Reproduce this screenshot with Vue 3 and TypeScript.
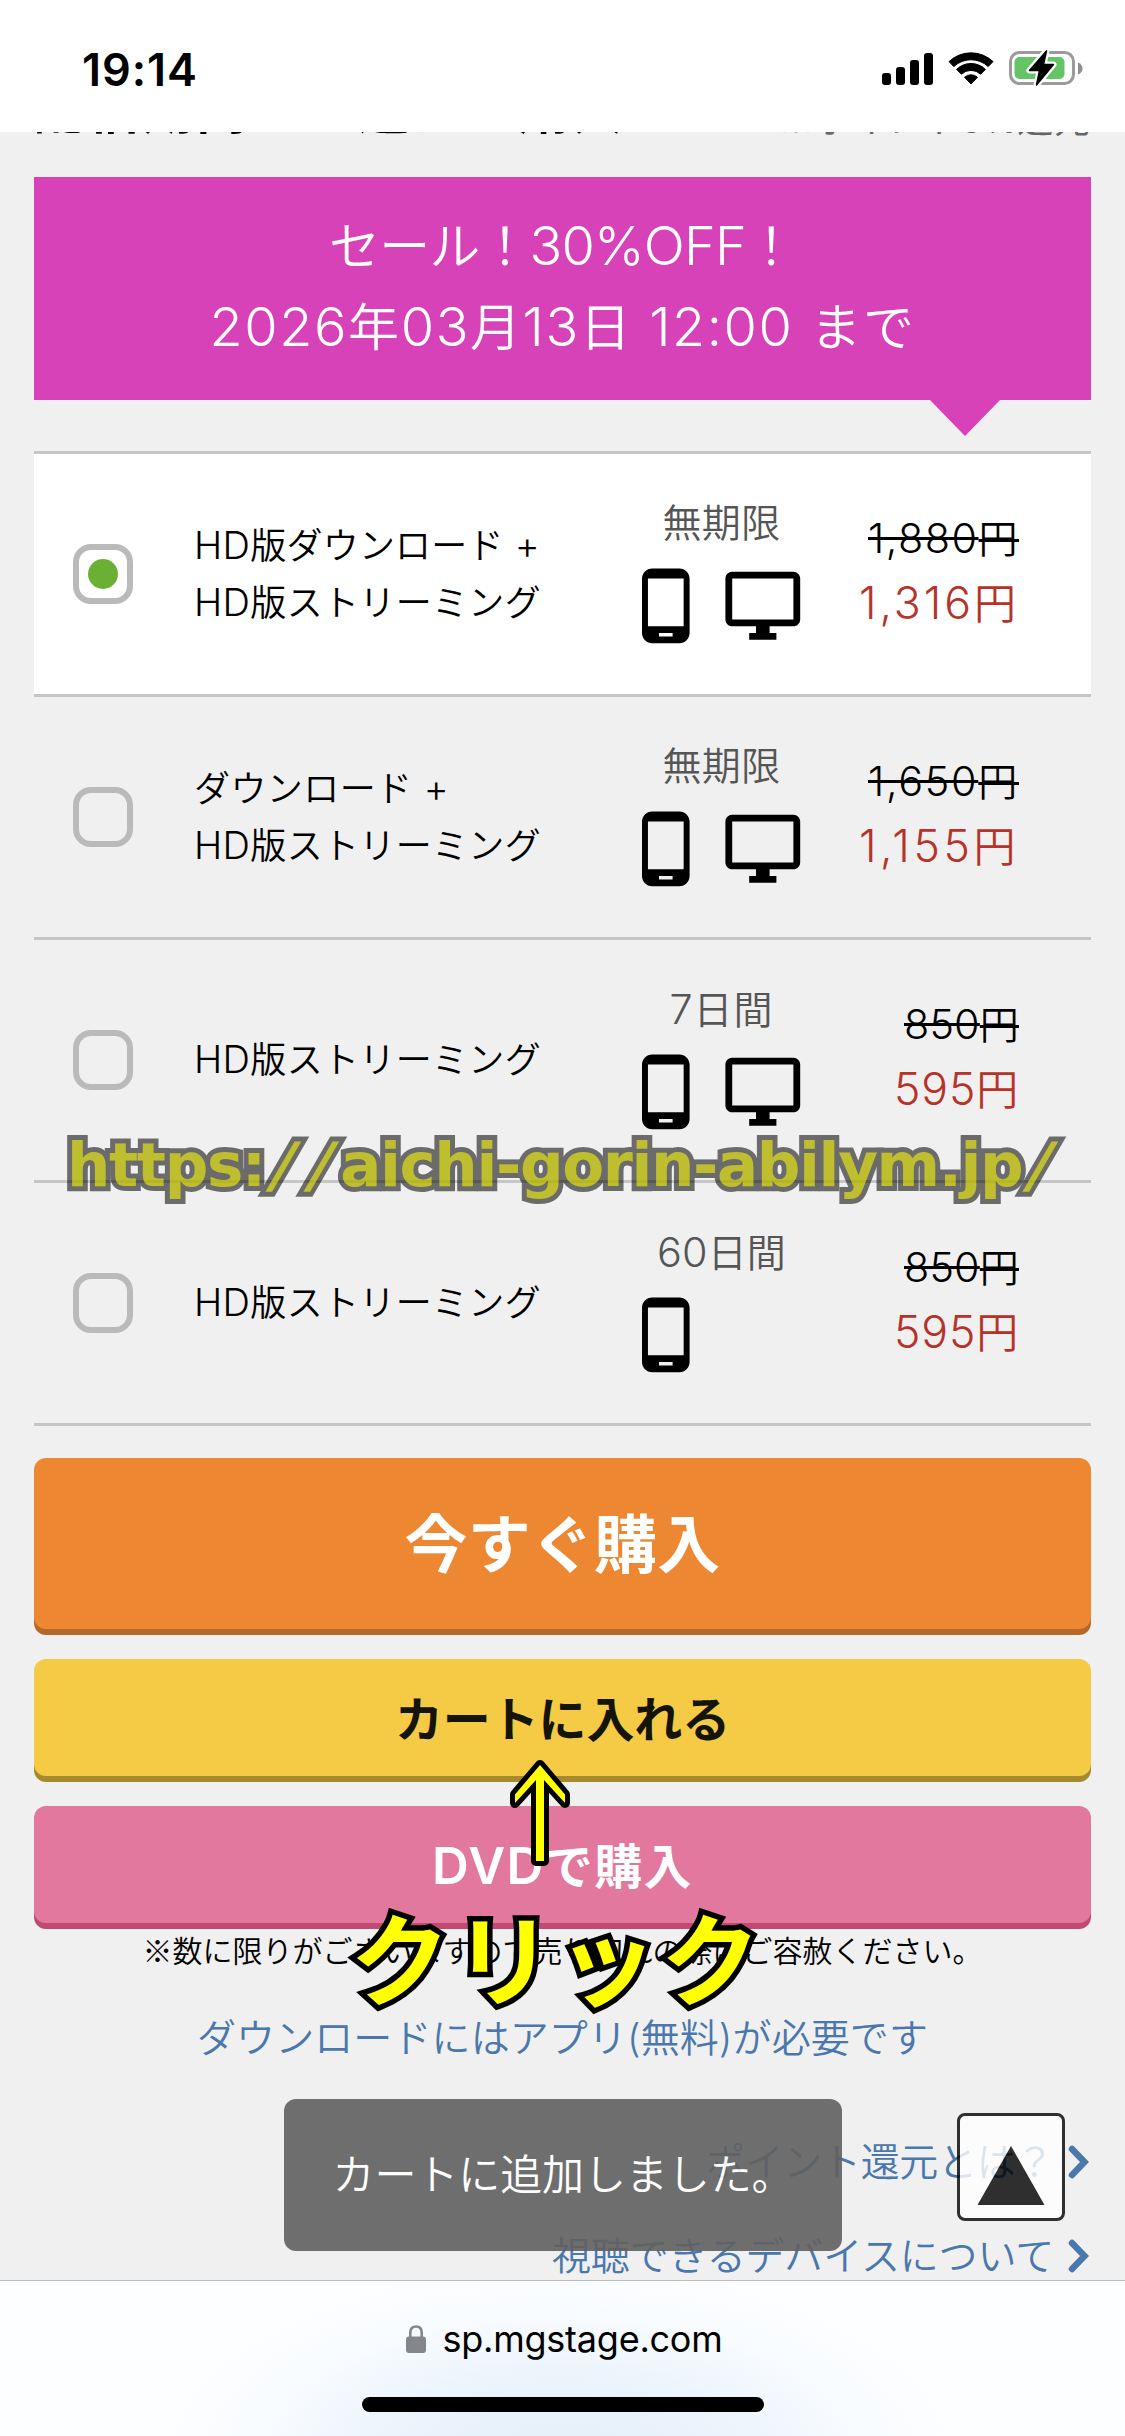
<script setup lang="ts">
import type { Directive } from 'vue'

interface Plan {
  label: { text: string; width: number }[]
  period: string
  periodWidth: number
  desktop: boolean
  before: string
  beforeWidth: number
  price: string
  priceWidth: number
  selected: boolean
}

const streaming = { text: 'HD版ストリーミング', width: 347 }

const plans: Plan[] = [
  {
    label: [{ text: 'HD版ダウンロード +', width: 346 }, streaming],
    period: '無期限', periodWidth: 118, desktop: true,
    before: '1,880', beforeWidth: 151, price: '1,316', priceWidth: 160, selected: true,
  },
  {
    label: [{ text: 'ダウンロード +', width: 255 }, streaming],
    period: '無期限', periodWidth: 118, desktop: true,
    before: '1,650', beforeWidth: 151, price: '1,155', priceWidth: 160, selected: false,
  },
  {
    label: [streaming],
    period: '7日間', periodWidth: 104, desktop: true,
    before: '850', beforeWidth: 115, price: '595', priceWidth: 125, selected: false,
  },
  {
    label: [streaming],
    period: '60日間', periodWidth: 129, desktop: false,
    before: '850', beforeWidth: 115, price: '595', priceWidth: 125, selected: false,
  },
]

/** Splits a text into runs so that Latin letters and digits can be set a little larger. */
function runs(text: string): { latin: boolean; text: string }[] {
  return (text.match(/[\x20-\x7e]+|[^\x20-\x7e]+/g) ?? []).map((part) => ({
    latin: /^[\x20-\x7e]/.test(part),
    text: part,
  }))
}

/** Tracks a line of text out (or in) to the given width. */
const vFit: Directive<HTMLElement, number> = {
  mounted(el, { value }) {
    const count = (el.textContent ?? '').length
    const natural = el.getBoundingClientRect().width
    el.style.letterSpacing = `${(value - natural) / count}px`
  },
}

const watermark = ['https:', '/', '/', 'aichi-gorin-abilym.jp', '/']
</script>

<template>
  <div class="phone">
    <header class="status">
      <span v-fit="116" class="fit clock">19:14</span>
      <div class="status-icons">
        <svg class="signal" width="51" height="32" viewBox="0 0 51 32">
          <rect x="0" y="20" width="9" height="12" rx="3" />
          <rect x="14" y="14" width="9" height="18" rx="3" />
          <rect x="28" y="7" width="9" height="25" rx="3" />
          <rect x="42" y="0" width="9" height="32" rx="3" />
        </svg>
        <svg class="wifi" width="46" height="33" viewBox="0 0 46 33">
          <path d="M1 9.600A32 32 0 0 1 45 9.600L40.200 14.600A25 25 0 0 0 5.800 14.600Z" stroke="#000" stroke-width="1" stroke-linejoin="round" />
          <path d="M8.600 17.400A20.500 20.500 0 0 1 37.400 17.400L32.600 22.200A14 14 0 0 0 13.400 22.200Z" stroke="#000" stroke-width="1" stroke-linejoin="round" />
          <path d="M16.500 25.300A9.600 9.600 0 0 1 29.500 25.300L23 32Z" stroke="#000" stroke-width="1" stroke-linejoin="round" />
        </svg>
        <svg class="battery" width="74" height="38" viewBox="0 0 74 38">
          <rect x="1.500" y="3.500" width="63" height="31" rx="9" fill="none" stroke="#9b9b9b" stroke-width="3" />
          <path d="M69 13.500V25.500C75 23.500 75 15.500 69 13.500Z" fill="#8f8f8f" />
          <rect x="5.500" y="8" width="50" height="22" rx="5" fill="#65c466" />
          <path d="M37.500 1.500L20.500 21.500H30.500L27.500 36L44.500 15.500H34.500Z" fill="#000" stroke="#fff" stroke-width="6" stroke-linejoin="round" paint-order="stroke" />
          <path d="M37.500 2L20.500 21.500H30.500L27.500 36L44.500 15.500H34.500Z" stroke="#000" stroke-width="1.500" stroke-linejoin="round" />
        </svg>
      </div>
    </header>

    <main class="page">
      <div class="heading">
        <span v-fit="592" class="fit heading-title">配信期間から選んで購入</span>
        <span v-fit="313" class="fit heading-note">※ポイント5%還元</span>
      </div>

      <section class="sale">
        <div class="sale-line">
          <span v-fit="467" class="fit"><span v-for="(r, i) in runs('セール！30%OFF！')" :key="i" :class="{ latin: r.latin }">{{ r.text }}</span></span>
        </div>
        <div class="sale-line">
          <span v-fit="706" class="fit"><span v-for="(r, i) in runs('2026年03月13日 12:00 まで')" :key="i" :class="{ latin: r.latin }">{{ r.text }}</span></span>
        </div>
        <i class="sale-tip"></i>
      </section>

      <ul class="plans">
        <li v-for="(plan, i) in plans" :key="i" class="plan" :class="{ selected: plan.selected }">
          <span class="check"><i v-if="plan.selected" class="dot"></i></span>
          <div class="label">
            <div v-for="(line, j) in plan.label" :key="j">
              <span v-fit="line.width" class="fit"><span v-for="(r, k) in runs(line.text)" :key="k" :class="{ latin: r.latin }">{{ r.text }}</span></span>
            </div>
          </div>
          <div class="term">
            <div class="period">
              <span v-fit="plan.periodWidth" class="fit"><span v-for="(r, k) in runs(plan.period)" :key="k" :class="{ latin: r.latin }">{{ r.text }}</span></span>
            </div>
            <div class="devices">
              <svg width="81.600" height="81.600" viewBox="0 0 24 24">
                <path d="M16 1H8C6.340 1 5 2.340 5 4v16c0 1.660 1.340 3 3 3h8c1.660 0 3-1.340 3-3V4c0-1.660-1.340-3-3-3zm-2 20h-4v-1h4v1zm3.250-3H6.750V4h10.500v14z" />
              </svg>
              <svg v-if="plan.desktop" width="81.600" height="81.600" viewBox="0 0 24 24">
                <path d="M21 2H3c-1.100 0-2 .9-2 2v12c0 1.100.9 2 2 2h7v2H8v2h8v-2h-2v-2h7c1.100 0 2-.9 2-2V4c0-1.100-.9-2-2-2zm0 14H3V4h18v12z" />
              </svg>
            </div>
          </div>
          <div class="prices">
            <div class="before"><span v-fit="plan.beforeWidth" class="fit struck"><span class="digits">{{ plan.before }}</span>円</span></div>
            <div class="now"><span v-fit="plan.priceWidth" class="fit"><span class="digits">{{ plan.price }}</span>円</span></div>
          </div>
        </li>
      </ul>

      <div class="actions">
        <button class="btn buy"><span v-fit="316" class="fit">今すぐ購入</span></button>
        <button class="btn cart"><span v-fit="335" class="fit">カートに入れる</span></button>
        <button class="btn dvd"><span v-fit="261" class="fit"><span class="latin">DVD</span>で購入</span></button>
      </div>

      <p class="note">※数に限りがございますので売り切れの際はご容赦ください。</p>
      <a class="app-link"><span v-fit="731" class="fit">ダウンロードにはアプリ(無料)が必要です</span></a>

      <nav class="links">
        <a>
          <span v-fit="348" class="fit">ポイント還元とは？</span>
          <svg width="21" height="34" viewBox="0 0 21 34"><path d="M4 4L16.500 17L4 30" /></svg>
        </a>
        <a>
          <span v-fit="502" class="fit">視聴できるデバイスについて</span>
          <svg width="21" height="34" viewBox="0 0 21 34"><path d="M4 4L16.500 17L4 30" /></svg>
        </a>
      </nav>
    </main>

    <footer class="browser">
      <div class="address">
        <svg width="20" height="28" viewBox="0 0 20 28">
          <path d="M4.300 13V7.500C4.300 3.500 6.500 1.500 10 1.500S15.700 3.500 15.700 7.500V13" fill="none" stroke="#85868b" stroke-width="2.600" />
          <rect x="0" y="11.500" width="20" height="16.500" rx="3" fill="#85868b" />
        </svg>
        <span v-fit="280" class="fit">sp.mgstage.com</span>
      </div>
      <i class="home"></i>
    </footer>

    <div class="toast"><span v-fit="461" class="fit">カートに追加しました。</span></div>
    <div class="to-top">
      <svg width="68" height="59" viewBox="0 0 68 59"><path d="M34 0L67.500 59H0.500Z" /></svg>
    </div>

    <div class="watermark outline"><span v-for="(part, i) in watermark" :key="i" :class="{ slash: part === '/' }" :data-text="part"></span></div>
    <div class="watermark"><span v-for="(part, i) in watermark" :key="i" :class="{ slash: part === '/' }">{{ part }}</span></div>

    <svg class="arrow" width="64" height="112" viewBox="0 0 64 112">
      <path d="M32 8L57 37.500V46L36 23V104H28V23L7 46V37.500Z" />
    </svg>
    <div class="click">クリック</div>
  </div>
</template>

<style>
body {
  background: #f0f0f0;
}
</style>

<style scoped>
.phone {
  position: relative;
  display: flex;
  flex-direction: column;
  width: 1125px;
  height: 2436px;
  overflow: hidden;
  background: #f0f0f0;
  color: #000;
  font-family: Inter, "Noto Sans CJK JP", sans-serif;
  font-weight: 350;
}

.fit {
  display: inline-block;
  white-space: pre;
}

.latin {
  font-size: 1.06em;
}

/* Status bar */
.status {
  flex: none;
  box-sizing: border-box;
  height: 132px;
  padding: 48px 42px 0 82px;
  display: flex;
  justify-content: space-between;
  align-items: flex-start;
  background: #fff;
}

.clock {
  font-size: 45px;
  line-height: 44px;
  font-weight: 600;
}

.status-icons {
  display: flex;
  align-items: flex-start;
}

.signal {
  margin: 5px 15px 0 0;
}

.wifi {
  margin: 4px 15px 0 0;
}

.battery {
  margin: 1px 0 0;
}

/* Page */
.page {
  flex: 1;
  min-height: 0;
  overflow: hidden;
  padding: 0 34px;
}

.heading {
  display: flex;
  justify-content: space-between;
  height: 45px;
  overflow: hidden;
  line-height: 51px;
}

.heading-title {
  margin-top: -47px;
  font-size: 51px;
  font-weight: 600;
}

.heading-note {
  margin-top: -40px;
  color: #666;
  font-family: "Noto Sans CJK JP", sans-serif;
  font-size: 36px;
  font-weight: 400;
}

.sale {
  position: relative;
  box-sizing: border-box;
  height: 223px;
  padding-top: 28px;
  background: #d842b8;
  color: #fff;
  font-size: 51px;
  line-height: 81px;
  text-align: center;
}

.sale-line {
  height: 81px;
}

.sale-tip {
  position: absolute;
  top: 222px;
  right: 90px;
  border: 36px solid transparent;
  border-top: 37px solid #d842b8;
  border-bottom: 0;
}

.plans {
  margin: 51px 0 0;
  padding: 0;
  list-style: none;
  border-top: 3px solid #c6c6c6;
}

.plan {
  display: grid;
  grid-template-columns: 60px 492px 193px 1fr;
  box-sizing: border-box;
  height: 243px;
  padding: 0 72px 0 39px;
  border-bottom: 3px solid #c6c6c6;
}

.plan.selected {
  background: #fff;
}

.check {
  align-self: center;
  display: flex;
  align-items: center;
  justify-content: center;
  box-sizing: border-box;
  width: 60px;
  height: 60px;
  border: 6px solid #bababa;
  border-radius: 18px;
}

.dot {
  width: 30px;
  height: 30px;
  border-radius: 50%;
  background: #6cb033;
}

.label {
  align-self: center;
  padding-left: 61px;
  font-size: 36px;
  line-height: 56.5px;
}

.term {
  padding-top: 40px;
}

.period {
  height: 58px;
  color: #555;
  font-size: 39px;
  line-height: 58px;
  text-align: center;
}

.devices {
  display: flex;
  gap: 15px;
  margin-top: 12.500px;
}

.prices {
  display: flex;
  flex-direction: column;
  align-items: flex-end;
  padding-top: 52px;
  line-height: 65px;
  white-space: nowrap;
}

.prices > div {
  height: 65px;
}

.before {
  font-size: 39px;
}

.struck {
  text-decoration: line-through;
  text-decoration-thickness: 3px;
}

.now {
  color: #b73329;
  font-size: 42px;
}

.digits {
  font-size: 1.060em;
}

.actions {
  display: flex;
  flex-direction: column;
  gap: 30px;
  margin-top: 32px;
}

.btn {
  height: 117px;
  padding: 0 0 4px;
  border: 0;
  border-radius: 12px;
  font-family: inherit;
  font-size: 48px;
  font-weight: 600;
}

.buy {
  height: 171px;
  padding-bottom: 9px;
  background: #ee8732;
  box-shadow: 0 6px 0 #b4682a;
  color: #fff;
  font-size: 63px;
}

.cart {
  background: #f5ca45;
  box-shadow: 0 6px 0 #a88a2e;
  color: #141408;
}

.dvd {
  background: #e2789d;
  box-shadow: 0 6px 0 #c04a72;
  color: #fff;
}

.note {
  margin: 4px 0 0;
  font-family: "Noto Sans CJK JP", sans-serif;
  font-size: 30px;
  line-height: 45px;
  text-align: center;
  white-space: nowrap;
}

.app-link {
  display: block;
  height: 60px;
  margin-top: 36px;
  color: #4a77ac;
  font-size: 39px;
  line-height: 60px;
  text-align: center;
}

.links {
  display: flex;
  flex-direction: column;
  gap: 34px;
  margin-top: 64px;
}

.links a {
  display: flex;
  align-items: center;
  justify-content: flex-end;
  gap: 14px;
  height: 60px;
  padding-right: 2px;
  color: #4a77ac;
  font-size: 39px;
  line-height: 60px;
}

.links path {
  fill: none;
  stroke: #4a77ac;
  stroke-width: 6.500;
  stroke-linecap: round;
}

/* Browser bar */
.browser {
  flex: none;
  display: flex;
  flex-direction: column;
  align-items: center;
  box-sizing: border-box;
  height: 156px;
  border-top: 1px solid #bcbcbc;
  background:
    radial-gradient(ellipse 400px 190px at 560px 175px, #e4f0fa 0%, #ecf4fc 45%, rgba(246, 250, 254, 0.700) 75%, rgba(255, 255, 255, 0) 100%),
    #fdfeff;
}

.address {
  display: flex;
  align-items: center;
  gap: 17px;
  height: 44px;
  margin: 36px 0 0 3px;
  font-size: 36px;
  font-weight: 400;
  line-height: 44px;
}

.home {
  width: 402px;
  height: 15px;
  margin-top: 36px;
  border-radius: 8px;
  background: #000;
}

/* Overlays */
.toast {
  position: absolute;
  top: 2099px;
  left: 284px;
  display: flex;
  align-items: center;
  justify-content: center;
  box-sizing: border-box;
  width: 558px;
  height: 152px;
  padding-bottom: 8px;
  border-radius: 12px;
  background: #616161;
  color: #fff;
  font-size: 42px;
  opacity: 0.900;
}

.to-top {
  position: absolute;
  top: 2113px;
  left: 957px;
  display: flex;
  justify-content: center;
  box-sizing: border-box;
  width: 108px;
  height: 108px;
  padding-top: 30px;
  border: 3px solid #000;
  border-radius: 8px;
  background: #fff;
  opacity: 0.800;
}

.watermark {
  position: absolute;
  top: 1129px;
  left: 67px;
  color: rgba(255, 255, 0, 0.560);
  font-family: "DejaVu Sans", sans-serif;
  font-size: 61px;
  font-weight: 700;
  letter-spacing: -1.370px;
  line-height: 72px;
  white-space: nowrap;
}

.slash {
  display: inline-block;
  padding: 0 7.700px;
  letter-spacing: 0;
  transform: skewX(-15deg);
}

.outline {
  color: #000;
  -webkit-text-stroke: 10px #000;
  stroke-linejoin: round;
  opacity: 0.550;
}

.outline span::before {
  content: attr(data-text);
}

.arrow {
  position: absolute;
  top: 1757px;
  left: 508px;
}

.arrow path {
  fill: #ff0;
  stroke: #000;
  stroke-width: 10px;
  stroke-linejoin: round;
  paint-order: stroke;
}

.click {
  position: absolute;
  top: 1902px;
  left: 350px;
  color: #ff0;
  font-size: 100px;
  font-weight: 700;
  letter-spacing: 3.500px;
  line-height: 120px;
  white-space: nowrap;
  -webkit-text-stroke: 11px #000;
  stroke-linejoin: round;
  paint-order: stroke fill;
}
</style>
